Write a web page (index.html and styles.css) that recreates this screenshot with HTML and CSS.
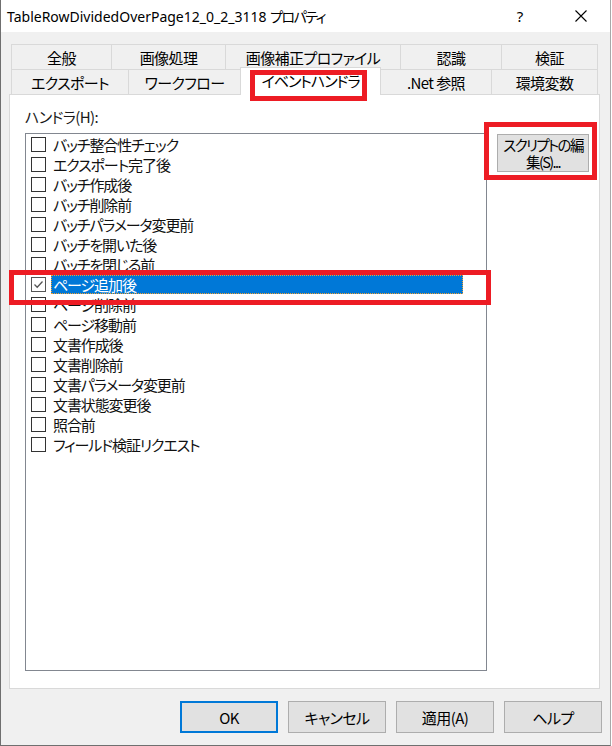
FILE: index.html
```html
<!DOCTYPE html>
<html lang="ja">
<head>
    <meta charset="UTF-8">
    <meta name="viewport" content="width=device-width, initial-scale=1.0">
    <title>TableRowDividedOverPage12_0_2_3118 プロパティ</title>
    <link rel="stylesheet" href="styles.css">
</head>
<body>
    <div class="window">
        <div class="titlebar">
            <span class="title">TableRowDividedOverPage12_0_2_3118 <span class="title-jp">プロパティ</span></span>
            <span class="title-help">?</span>
            <span class="title-close">
                <svg width="12" height="12" viewBox="0 0 12 12">
                    <path d="M0.5 0.5 L11.5 11.5 M11.5 0.5 L0.5 11.5" stroke="#000" stroke-width="1.1" fill="none"/>
                </svg>
            </span>
        </div>

        <div class="body">
            <div class="tabs">
                <div class="tab-row row-top">
                    <div class="tab">全般</div>
                    <div class="tab">画像処理</div>
                    <div class="tab">画像補正プロファイル</div>
                    <div class="tab">認識</div>
                    <div class="tab">検証</div>
                </div>
                <div class="tab-row row-bottom">
                    <div class="tab">エクスポート</div>
                    <div class="tab">ワークフロー</div>
                    <div class="tab active">イベントハンドラ</div>
                    <div class="tab">.Net 参照</div>
                    <div class="tab">環境変数</div>
                </div>
            </div>

            <div class="panel">
                <div class="handler-label">ハンドラ(H):</div>
                <div class="handler-area">
                    <div class="listbox">
                        <div class="item"><span class="check"></span><span class="item-label">バッチ整合性チェック</span></div>
                        <div class="item"><span class="check"></span><span class="item-label">エクスポート完了後</span></div>
                        <div class="item"><span class="check"></span><span class="item-label">バッチ作成後</span></div>
                        <div class="item"><span class="check"></span><span class="item-label">バッチ削除前</span></div>
                        <div class="item"><span class="check"></span><span class="item-label">バッチパラメータ変更前</span></div>
                        <div class="item"><span class="check"></span><span class="item-label">バッチを開いた後</span></div>
                        <div class="item"><span class="check"></span><span class="item-label">バッチを閉じる前</span></div>
                        <div class="item selected">
                            <span class="check checked">
                                <svg width="13" height="13" viewBox="0 0 13 13">
                                    <polyline points="2.5,6.5 5.2,9.2 10.5,3.5" stroke="#555" stroke-width="1.3" fill="none"/>
                                </svg>
                            </span>
                            <span class="item-label">ページ追加後</span>
                        </div>
                        <div class="item"><span class="check"></span><span class="item-label">ページ削除前</span></div>
                        <div class="item"><span class="check"></span><span class="item-label">ページ移動前</span></div>
                        <div class="item"><span class="check"></span><span class="item-label">文書作成後</span></div>
                        <div class="item"><span class="check"></span><span class="item-label">文書削除前</span></div>
                        <div class="item"><span class="check"></span><span class="item-label">文書パラメータ変更前</span></div>
                        <div class="item"><span class="check"></span><span class="item-label">文書状態変更後</span></div>
                        <div class="item"><span class="check"></span><span class="item-label">照合前</span></div>
                        <div class="item"><span class="check"></span><span class="item-label">フィールド検証リクエスト</span></div>
                    </div>
                    <button class="btn btn-script">スクリプトの編<br>集(S)...</button>
                </div>
            </div>

            <div class="footer">
                <button class="btn btn-default">OK</button>
                <button class="btn">キャンセル</button>
                <button class="btn">適用(A)</button>
                <button class="btn">ヘルプ</button>
            </div>
        </div>
    </div>

    <!-- red annotation frames drawn over the dialog -->
    <div class="mark mark-tab"></div>
    <div class="mark mark-item"></div>
    <div class="mark mark-script"></div>
</body>
</html>
```

FILE: styles.css
```css
* {
    box-sizing: border-box;
}

body {
    margin: 0;
    width: 612px;
    height: 746px;
    position: relative;
    overflow: hidden;
    background: #fff;
    font-family: "Noto Sans CJK JP", "Noto Sans", sans-serif;
    font-size: 15px;
    color: #000;
    font-feature-settings: "palt";
}

.window {
    width: 611px;
    height: 746px;
    border-left: 1px solid #6f6f6f;
    border-right: 1px solid #a8a8a8;
    border-bottom: 1px solid #6f6f6f;
    display: flex;
    flex-direction: column;
}

.titlebar {
    height: 32px;
    background: #fff;
    display: flex;
    align-items: center;
    padding-left: 6px;
}

.title {
    font-family: "Noto Sans", "Noto Sans CJK JP", sans-serif;
    font-size: 14px;
    flex: 1;
    white-space: nowrap;
}

.title-jp {
    font-family: "Noto Sans CJK JP", sans-serif;
    letter-spacing: -1.5px;
}

.title-help {
    font-family: "Noto Sans", sans-serif;
    font-size: 15px;
    width: 20px;
    margin-right: 45px;
    text-align: center;
}

.title-close {
    display: flex;
    margin-right: 23px;
}

.body {
    flex: 1;
    background: #f0f0f0;
    padding-top: 12px;
}

/* tab strip */
.tabs {
    margin-left: 10px;
    width: 587px;
}

.tab-row {
    display: grid;
    height: 25px;
}

.row-top {
    grid-template-columns: 100px 114px 175px 101px 97px;
}

.row-bottom {
    grid-template-columns: 117px 112px 141px 110px 107px;
}

.tab {
    border-top: 1px solid #d9d9d9;
    border-left: 1px solid #d9d9d9;
    display: flex;
    align-items: center;
    justify-content: center;
    background: #f0f0f0;
    line-height: 1;
    padding-top: 1px;
    letter-spacing: -0.6px;
    white-space: nowrap;
}

.tab:last-child {
    border-right: 1px solid #d9d9d9;
}

.tab.active {
    position: relative;
    z-index: 1;
    background: #fff;
    border-right: 1px solid #d9d9d9;
    margin-top: -2px;
    margin-bottom: -1px;
    padding-top: 0;
    padding-bottom: 2px;
    letter-spacing: -1px;
}

.tab.active + .tab {
    border-left: none;
}

/* page body */
.panel {
    margin-left: 8px;
    width: 591px;
    height: 595px;
    background: #fff;
    border: 1px solid #d9d9d9;
    padding: 12px 0 0 15px;
}

.handler-label {
    height: 20px;
    line-height: 20px;
    margin-bottom: 6px;
    color: #1a1a1a;
    letter-spacing: -0.6px;
}

.handler-area {
    display: flex;
    align-items: flex-start;
    gap: 10px;
}

.listbox {
    width: 462px;
    height: 538px;
    border: 1px solid #828790;
    background: #fff;
    flex-shrink: 0;
}

.item {
    height: 20px;
    display: flex;
    align-items: center;
    padding-left: 5px;
    white-space: nowrap;
}

.check {
    width: 15px;
    height: 15px;
    flex-shrink: 0;
    border: 1px solid #333;
    background: #fff;
    margin-right: 5px;
    display: flex;
    align-items: center;
    justify-content: center;
}

.check.checked {
    border-color: #555;
}

.item-label {
    width: 412px;
    height: 19px;
    line-height: 19px;
    padding-left: 2px;
    color: #111;
    letter-spacing: -1.1px;
}

.selected .item-label {
    background: #0078d7;
    color: #fff;
    outline: 1px dotted #f0a030;
    outline-offset: -1px;
}

/* buttons */
.btn {
    font-family: "Noto Sans CJK JP", "Noto Sans", sans-serif;
    font-size: 15px;
    font-feature-settings: "palt";
    color: #000;
    background: #e1e1e1;
    border: 1px solid #adadad;
    padding: 0;
    width: 98px;
    height: 32px;
    letter-spacing: -0.6px;
}

.btn-script {
    width: 92px;
    height: 38px;
    margin-top: 1px;
    line-height: 17px;
    font-size: 14.5px;
    white-space: nowrap;
    letter-spacing: -1.6px;
    flex-shrink: 0;
}

.btn-default {
    border: 2px solid #0078d7;
}

.footer {
    display: flex;
    justify-content: flex-end;
    gap: 10px;
    padding-right: 8px;
    margin-top: 12px;
}

/* red annotation frames */
.mark {
    position: absolute;
    z-index: 10;
    border: 5px solid #ed1c24;
}

.mark-tab {
    left: 250px;
    top: 70px;
    width: 117px;
    height: 31px;
}

.mark-item {
    left: 9px;
    top: 270px;
    width: 482px;
    height: 35px;
}

.mark-script {
    left: 484px;
    top: 122px;
    width: 113px;
    height: 58px;
}
```
